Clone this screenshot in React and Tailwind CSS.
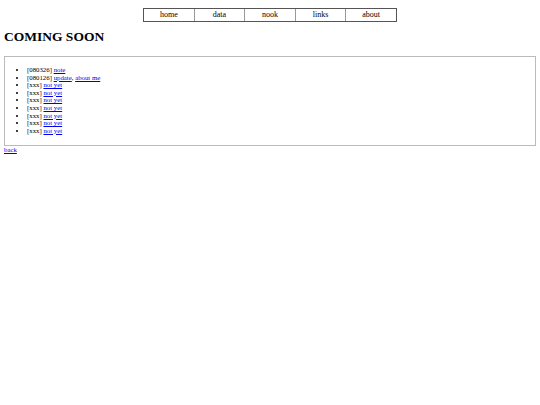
const items = [
    { tag: "080326", links: ["note"] },
    { tag: "080126", links: ["update", "about me"] },
    { tag: "xxx", links: ["not yet"] },
    { tag: "xxx", links: ["not yet"] },
    { tag: "xxx", links: ["not yet"] },
    { tag: "xxx", links: ["not yet"] },
    { tag: "xxx", links: ["not yet"] },
    { tag: "xxx", links: ["not yet"] },
    { tag: "xxx", links: ["not yet"] },
];

const navItems = ["home", "data", "nook", "links", "about"];

const App = () => {
    return (
        <div className="min-h-[405px] bg-white text-black font-['Liberation_Serif',serif] px-[4px]">
            <div className="flex justify-center pt-[8px]">
                <div className="flex border border-[#555] w-[254px] h-[14px]">
                    {navItems.map((n, i) => (
                        <div
                            key={n}
                            className={`flex-1 flex items-center justify-center text-[8px] leading-none ${i > 0 ? "border-l border-[#999]" : ""}`}
                        >
                            {n}
                        </div>
                    ))}
                </div>
            </div>

            <h1 className="mt-[5px] text-[13.5px] font-bold leading-[20px]">COMING SOON</h1>

            <div className="mt-[9px] border border-[#bbb] w-[532px] h-[90px] pt-[9px]">
                <ul className="list-disc pl-[22px] text-[6.8px] leading-[7.6px]">
                    {items.map((it, i) => (
                        <li key={i}>
                            [{it.tag}]{" "}
                            {it.links.map((l, j) => (
                                <span key={j}>
                                    {j > 0 && ", "}
                                    <a href="#" className="text-[#00e] underline">{l}</a>
                                </span>
                            ))}
                        </li>
                    ))}
                </ul>
            </div>

            <a href="#" className="block mt-[0px] text-[6.8px] leading-[8px] text-[#00e] underline">back</a>
        </div>
    );
};

export default App;
